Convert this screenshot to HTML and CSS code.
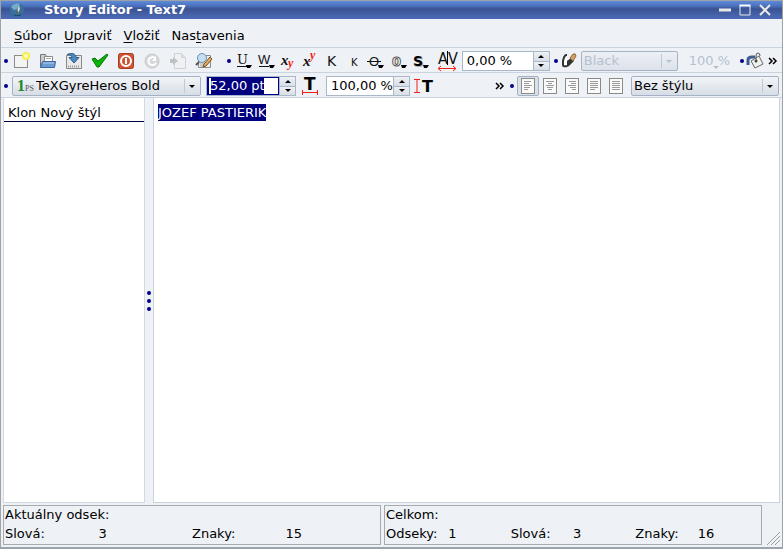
FILE: index.html
```html
<!DOCTYPE html>
<html lang="sk">
<head>
<meta charset="utf-8">
<title>Story Editor - Text7</title>
<link rel="stylesheet" href="styles.css">
</head>
<body>
<div class="window">
  <header class="titlebar">
    <svg class="logo" width="16" height="16" viewBox="0 0 16 16"><circle cx="8" cy="8" r="7" fill="#37709a"/><path d="M2 5a7 7 0 0 1 9-3L8 7 5 8z" fill="#78a9c8"/><path d="M10 3l1 4-2 4-1-2z" fill="#c9d8d8"/><path d="M8 8l1 4" stroke="#7b5b32"/><path d="M3 11c3 3 7 3 10 0l-2 3H6z" fill="#174764"/></svg>
    <h1>Story Editor - Text7</h1>
    <button class="winbtn" aria-label="Minimalizovať"><svg width="14" height="14"><path d="M1 7h12" stroke="#e8e8e8" stroke-width="3"/></svg></button>
    <button class="winbtn" aria-label="Maximalizovať"><svg width="14" height="14"><path d="M2 3v9h10V3" fill="none" stroke="#e8e8e8"/><path d="M1.500 2.500h11" stroke="#fff" stroke-width="2"/></svg></button>
    <button class="winbtn" aria-label="Zavrieť"><svg width="14" height="14"><path d="M2 2l10 10M12 2L2 12" stroke="#e8e8e8" stroke-width="2"/></svg></button>
  </header>

  <nav class="menubar">
    <button><u>S</u>úbor</button><button><u>U</u>praviť</button><button><u>V</u>ložiť</button><button>Nas<u>t</u>avenia</button>
  </nav>

  <div class="toolbar">
    <span class="handle"></span>
    <button class="tool" aria-label="Nový"><svg width="18" height="18"><rect x="1.500" y="3.500" width="13" height="12" fill="#f4f4f2" stroke="#8b8b88"/><circle cx="13" cy="4" r="4" fill="#f7ee52"/><circle cx="13" cy="4" r="2" fill="#fffcc0"/></svg></button>
    <button class="tool" aria-label="Otvoriť"><svg width="18" height="18"><path d="M1.500 15.500v-13h5l1 2h4v11z" fill="#ccc" stroke="#777"/><path d="M5.500 4.500h8v5h-8z" fill="#fff" stroke="#888"/><path d="M7 6.500h5" stroke="#aaa"/><path d="M3.500 9.500h13l-1 6h-14z" fill="#6f9bd0" stroke="#3867a5"/><path d="M4 11h11" stroke="#b5cdeb"/></svg></button>
    <button class="tool" aria-label="Uložiť"><svg width="18" height="18"><path d="M1.500 3.500h15v13h-15z" fill="#e9e9e9" stroke="#888"/><path d="M3 14.500h11" stroke="#999" stroke-width="2" stroke-dasharray="1 1"/><path d="M2 2.500c5-2 9-1 9 3h3L9 11 4 5.500h3C7 3 5 2.500 2 2.500z" fill="#4d88bd" stroke="#2a5f92"/></svg></button>
    <button class="tool" aria-label="Aktualizovať a zavrieť"><svg width="18" height="18"><path d="M1 7l3-1 3 3 9-7 1 1-9 12H6z" fill="#08b408" stroke="#087808"/></svg></button>
    <button class="tool" aria-label="Zavrieť bez uloženia"><svg width="18" height="18"><rect x="1.500" y="1.500" width="15" height="15" rx="2" fill="#cf5535" stroke="#a53b20"/><circle cx="9" cy="9" r="5" fill="none" stroke="#fff" stroke-width="2"/><path d="M9 6v6" stroke="#fff" stroke-width="2"/></svg></button>
    <button class="tool" aria-label="Znovu načítať" disabled><svg width="18" height="18"><circle cx="9" cy="9" r="7" fill="#d6d8da" stroke="#c6c8cb"/><path d="M12 6a4 4 0 1 0 1 5" fill="none" stroke="#fff" stroke-width="2"/><path d="M13 4v5H9z" fill="#fff"/></svg></button>
    <button class="tool" aria-label="Aktualizovať rám" disabled><svg width="18" height="18"><path d="M5.500 1.500h7l4 4v11h-11z" fill="#f0f1f2" stroke="#cfd1d3"/><path d="M12.500 1.500v4h4" fill="#dfe1e2" stroke="#cfd1d3"/><path d="M1 7h3V5l5 4-5 4v-2H1z" fill="#bfc2c4"/></svg></button>
    <button class="tool" aria-label="Hľadať"><svg width="18" height="18"><path d="M3.500 3.500h12v12h-12z" fill="#eee" stroke="#8c8c88"/><path d="M5 12h5M5 14h4" stroke="#aaa"/><circle cx="7" cy="6" r="4.500" fill="#c4def4" stroke="#6993b6"/><path d="M4 10l-3 3" stroke="#555" stroke-width="2"/><path d="M8 15l1-3 6-7 2 2-6 7z" fill="#e3ae56" stroke="#70532b"/></svg></button>

    <span class="handle gapped"></span>
    <button class="style" aria-label="Podčiarknuté"><svg width="20" height="18"><text class="serif" x="2" y="12" font-size="13">U</text><path d="M2 14.500h10" stroke="#111"/><path d="M11 13h6l-2 3h-3z"/></svg></button>
    <button class="style" aria-label="Podčiarknuté slová"><svg width="20" height="18"><text class="thin" x="1" y="12" font-size="13">W</text><path d="M2 14.500h10" stroke="#111"/><path d="M12 13h6l-2 3h-3z"/></svg></button>
    <button class="style" aria-label="Dolný index"><svg width="20" height="18"><text class="ital" x="2" y="13" font-size="15">x</text><text class="ital red" x="9" y="15" font-size="12">y</text></svg></button>
    <button class="style" aria-label="Horný index"><svg width="20" height="18"><text class="ital" x="2" y="14" font-size="15">x</text><text class="ital red" x="9" y="7" font-size="12">y</text></svg></button>
    <button class="style" aria-label="Všetko veľké"><svg width="20" height="18"><text x="4" y="14" font-size="14">K</text></svg></button>
    <button class="style" aria-label="Kapitálky"><svg width="20" height="18"><text x="6" y="14" font-size="10">K</text></svg></button>
    <button class="style" aria-label="Prečiarknuté"><svg width="20" height="18"><text class="thin" x="2" y="14" font-size="13">O</text><path d="M0 9.500h14" stroke="#111"/><path d="M11 13h6l-2 3h-3z"/></svg></button>
    <button class="style" aria-label="Obrys"><svg width="20" height="18"><text class="outline" x="3" y="14" font-size="13">0</text><path d="M12 13h6l-2 3h-3z"/></svg></button>
    <button class="style" aria-label="Tieň"><svg width="20" height="18"><text class="bold gray" x="3" y="15" font-size="14">S</text><text class="bold" x="2" y="14" font-size="14">S</text><path d="M12 13h6l-2 3h-3z"/></svg></button>
    <label class="measure track" for="track"><svg width="20" height="22"><text class="narrow" x="1" y="14" font-size="16">A</text><text class="narrow" x="11" y="14" font-size="16">V</text><path d="M10.500 1v14" stroke="#000"/><path d="M1.500 18.500h17M4 16l-3 2.500L4 21M16 16l3 2.500L16 21" fill="none" stroke="#f32013"/></svg></label>
    <div class="spin wide"><input id="track" value="0,00 %" aria-label="Prekladanie"><span class="steps"><button class="up" aria-label="Viac"></button><button class="down" aria-label="Menej"></button></span></div>
    <span class="handle tight"></span>
    <label class="measure small" for="color"><svg width="16" height="18"><path d="M6 3H5Q3 4 2 9v4q0 2 4 1" fill="#fff" stroke="#333" stroke-width="2"/><path d="M6 15V9l4-3 3 3-5 5z" fill="#333"/><path d="M9 6l3-4q3-1 3 2l-3 5z" fill="#d9a064" stroke="#8d6b45"/></svg></label>
    <div class="combo color off"><select id="color" disabled aria-label="Farba"><option>Black</option></select></div>
    <button class="shade" disabled>100 %</button>
    <span class="handle tight"></span>
    <button class="measure small" aria-label="Výplň"><svg width="18" height="18"><path d="M2 13V8q0-3 4-3h3" fill="none" stroke="#3c5e92" stroke-width="3"/><path d="M5 9l8-5 4 8-8 4z" fill="#f1f1ee" stroke="#666"/><path d="M10 9V4q0-3 2-3t2 3" fill="none" stroke="#555"/><circle cx="10" cy="9" r="1.500" fill="#444"/></svg></button>
    <button class="more" aria-label="Ďalšie nástroje"><svg width="9" height="8"><path d="M1 1l3 3-3 3M5 1l3 3-3 3" fill="none" stroke="#000" stroke-width="1.500"/></svg></button>
  </div>

  <div class="toolbar second">
    <span class="handle"></span>
    <div class="combo font"><svg class="fonticon" width="15" height="16"><text class="one" x="-1" y="13" font-size="16">1</text><text class="ps" x="7" y="13" font-size="8">PS</text></svg><select aria-label="Písmo"><option>TeXGyreHeros Bold</option></select></div>
    <div class="spin size"><input class="picked" value="52,00 pt" aria-label="Veľkosť písma"><span class="steps"><button class="up" aria-label="Väčšie"></button><button class="down" aria-label="Menšie"></button></span></div>
    <label class="measure" for="scale"><svg width="18" height="20"><text class="bold" x="3" y="14" font-size="17">T</text><path d="M1.500 14v5M16.500 14v5M1 16.500h16" stroke="#f32013"/></svg></label>
    <div class="spin scale"><input id="scale" value="100,00 %" aria-label="Šírka znakov"><span class="steps"><button class="up" aria-label="Viac"></button><button class="down" aria-label="Menej"></button></span></div>
    <button class="measure" aria-label="Výška znakov"><svg width="20" height="20"><path d="M0 3.500h6M0 16.500h6M3 3v14" stroke="#f32013"/><text class="bold" x="8" y="16" font-size="16">T</text></svg></button>
    <button class="more push" aria-label="Ďalšie nástroje"><svg width="9" height="8"><path d="M1 1l3 3-3 3M5 1l3 3-3 3" fill="none" stroke="#000" stroke-width="1.500"/></svg></button>
    <span class="handle tight"></span>
    <button class="align on" aria-label="Vľavo" aria-pressed="true"><svg width="14" height="16"><rect class="page" x=".5" y=".5" width="13" height="15"/><path d="M3 3.500h7M3 5.500h5M3 7.500h8M3 9.500h6M3 11.500h4" stroke="#999"/></svg></button>
    <button class="align" aria-label="Na stred"><svg width="14" height="16"><rect class="page" x=".5" y=".5" width="13" height="15"/><path d="M3 3.500h8M5 5.500h4M3 7.500h8M4 9.500h6M5 11.500h4" stroke="#999"/></svg></button>
    <button class="align" aria-label="Vpravo"><svg width="14" height="16"><rect class="page" x=".5" y=".5" width="13" height="15"/><path d="M4 3.500h7M6 5.500h5M3 7.500h8M5 9.500h6M7 11.500h4" stroke="#999"/></svg></button>
    <button class="align" aria-label="Do bloku"><svg width="14" height="16"><rect class="page" x=".5" y=".5" width="13" height="15"/><path d="M3 3.500h8M3 5.500h8M3 7.500h8M3 9.500h8M3 11.500h5" stroke="#999"/></svg></button>
    <button class="align" aria-label="Vynútený blok"><svg width="14" height="16"><rect class="page" x=".5" y=".5" width="13" height="15"/><path d="M3 3.500h8M3 5.500h8M3 7.500h8M3 9.500h8M3 11.500h8" stroke="#999"/></svg></button>
    <div class="combo para"><select aria-label="Štýl odseku"><option>Bez štýlu</option></select></div>
  </div>

  <main class="work">
    <aside class="styles"><div class="stylename">Klon Nový štýl</div></aside>
    <div class="splitter"><i></i><i></i><i></i></div>
    <div class="editor" contenteditable="true" role="textbox" aria-label="Text" spellcheck="false"><mark>JOZEF PASTIERIK</mark></div>
  </main>

  <footer class="status">
    <section class="stats four"><h2>Aktuálny odsek:</h2><span>Slová:</span><span>3</span><span>Znaky:</span><span>15</span></section>
    <section class="stats six"><h2>Celkom:</h2><span>Odseky:</span><span>1</span><span>Slová:</span><span>3</span><span>Znaky:</span><span>16</span></section>
    <svg class="grip" width="13" height="13"><path d="M0 13L13 0M4 13l9-9M8 13l5-5" stroke="#9a9fa4"/></svg>
  </footer>
</div>
</body>
</html>
```
FILE: styles.css
```css
* { box-sizing: border-box; }
body { margin: 0; }
body, button, input, select { font: 13px/16px "DejaVu Sans", sans-serif; color: #000; }
button { padding: 0; border: 0; background: none; }
svg { display: block; flex: none; overflow: visible; }

.window {
  display: flex;
  flex-direction: column;
  height: 100vh;
  background: #eef1f6;
  border: 1px solid #a0a3a6;
  border-bottom: 2px solid #9ca3ab;
}

.titlebar {
  display: flex;
  align-items: center;
  height: 18px;
  flex: none;
  padding: 0 7px 0 8px;
  background: linear-gradient(#5e8bd8 0, #4a70bd 5px, #3a5392 8px, #4460a6 13px, #4a6bb6);
}
.titlebar h1 {
  flex: 1;
  margin: 0 0 0 19px;
  font-size: 13px;
  line-height: 18px;
  color: #fff;
}
.winbtn { width: 20px; display: grid; place-items: center; }

.menubar {
  display: flex;
  height: 28px;
  flex: none;
  align-items: center;
  padding: 5px 7px 0;
}
.menubar button { padding: 0 6px; }
.menubar u { text-underline-offset: 2px; }

.toolbar {
  display: flex;
  align-items: center;
  height: 25px;
  flex: none;
  padding: 1px 3px 0 2px;
  border-top: 1px solid #c9d3de;
}
.handle { flex: none; width: 6px; display: grid; place-items: center; }
.handle::before { content: ""; width: 4px; height: 4px; border-radius: 2px; background: #00008b; }
.handle.gapped { margin: 0 2px 0 9px; }
.handle.tight { margin-left: 3px; }
.tool { width: 26px; display: grid; place-items: center; }
.style { width: 22px; display: grid; place-items: center; }
.measure { width: 28px; display: grid; place-items: center; flex: none; }
.measure.track { width: 30px; }
.measure.small { width: 20px; }
.more { width: 14px; display: grid; place-items: center; }
.more.push { margin-left: auto; }

text { font-family: "DejaVu Sans", sans-serif; fill: #111; }
text.serif { font-family: "DejaVu Serif", serif; }
text.thin { font-family: "Liberation Sans", sans-serif; }
text.ital { font-family: "Liberation Serif", serif; font-style: italic; font-weight: bold; }
text.red { fill: #f32013; }
text.bold { font-weight: bold; fill: #000; }
text.gray { fill: #aaa; }
text.outline { font-weight: bold; fill: #fff; stroke: #555; }
text.narrow { font-family: "Liberation Sans Narrow", "DejaVu Sans Condensed", sans-serif; }
text.one { font-family: "Liberation Serif", serif; font-weight: bold; fill: #198a28; }
text.ps { font-family: "Liberation Serif", serif; fill: #555; }

.spin { display: flex; height: 20px; flex: none; border: 1px solid #a9b8c9; background: #fff; }
.spin input { flex: 1; min-width: 0; padding: 0 0 0 4px; border: 0; outline: 0; background: none; }
.spin.wide { width: 88px; }
.spin.size { width: 90px; margin-left: 5px; }
.spin.scale { width: 84px; margin-left: 2px; }
.spin .picked {
  padding-left: 1px;
  border: 1px solid #00008b;
  border-left-width: 2px;
  color: #fff;
  background: linear-gradient(90deg, #fff 2px, #00007f 2px 55px, #fff 55px);
}
.steps { display: grid; grid-template-rows: 1fr 1fr; width: 16px; border-left: 1px solid #a9b8c9; }
.steps button { display: grid; place-items: center; background: linear-gradient(#eef1f5, #d8dee6); }
.steps button + button { border-top: 1px solid #a9b8c9; }
.steps button::before { content: ""; border: 3px solid transparent; }
.steps .up::before { border-top-width: 0; border-bottom-color: #000; }
.steps .down::before { border-bottom-width: 0; border-top-color: #000; }

.combo {
  position: relative;
  display: flex;
  align-items: center;
  height: 20px;
  flex: none;
  border: 1px solid #a3b3c5;
  border-radius: 2px;
  background: linear-gradient(#f3f5f8, #d7dde5);
}
.combo select {
  flex: 1;
  min-width: 0;
  height: 18px;
  padding: 0 18px 0 2px;
  border: 0;
  background: none;
  appearance: none;
  opacity: 1;
}
.combo::before {
  content: "";
  position: absolute;
  right: 15px;
  top: 2px;
  bottom: 2px;
  border-left: 1px solid #c0cad5;
  pointer-events: none;
}
.combo::after {
  content: "";
  position: absolute;
  right: 5px;
  top: 8px;
  border: 3px solid transparent;
  border-top-color: #000;
  border-bottom: 0;
  pointer-events: none;
}
.combo.font { width: 189px; margin-left: 3px; }
.combo.color { width: 97px; margin-left: 2px; }
.combo.para { width: 148px; margin-left: 4px; }
.combo.off, .combo.off select, .shade { color: #b5c1cf; }
.combo.off { background: linear-gradient(#eceff4, #dde2ea); }
.combo.off::after { border-top-color: #b5c1cf; }
.fonticon { margin: 0 1px 0 5px; }
.shade { position: relative; margin: 0 6px 0 11px; white-space: nowrap; }
.shade::after {
  content: "";
  position: absolute;
  left: 24px;
  bottom: 0;
  border: 3px solid transparent;
  border-top-color: #b5c1cf;
  border-bottom: 0;
}

.align { width: 22px; height: 20px; display: grid; place-items: center; }
.align.on { margin-left: 2px; border: 1px solid #a3b3c5; border-radius: 2px; background: #dbe1e9; }
.page { fill: #fafafa; stroke: #8a8a86; }

.work {
  display: grid;
  grid-template-columns: 142px 8px 1fr;
  flex: 1;
  min-height: 0;
  padding: 0 2px;
  border-top: 1px solid #c9d3de;
}
.styles { background: #fff; border: 1px solid #d5dae0; border-top: 0; }
.stylename { padding: 7px 4px 0; height: 24px; border-bottom: 1px solid #000040; }
.splitter { display: flex; flex-direction: column; align-items: center; justify-content: center; gap: 4px; }
.splitter i { width: 4px; height: 4px; border-radius: 2px; background: #00008b; }
.editor { background: #fff; border: 1px solid #c9d3de; border-top: 0; padding: 7px 4px; outline: 0; }
.editor mark { background: #00007f; color: #fff; padding: 1px 0; }

.status { display: grid; grid-template-columns: 1fr 1fr 15px; gap: 3px; flex: none; padding: 2px; }
.stats { display: grid; grid-template-rows: 18px 20px; align-items: center; height: 40px; padding: 0 1px; border: 1px solid #a6abb0; }
.stats h2 { grid-column: 1 / -1; margin: 0; font-size: 13px; font-weight: normal; }
.four { grid-template-columns: repeat(4, 1fr); }
.six { grid-template-columns: repeat(6, 1fr); }
.grip { align-self: end; justify-self: end; }
```
